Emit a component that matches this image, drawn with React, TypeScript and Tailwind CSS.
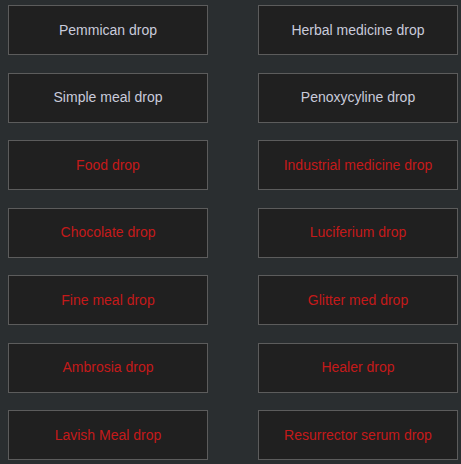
const items: { label: string; unlocked: boolean }[] = [
  { label: "Pemmican drop", unlocked: true },
  { label: "Herbal medicine drop", unlocked: true },
  { label: "Simple meal drop", unlocked: true },
  { label: "Penoxycyline drop", unlocked: true },
  { label: "Food drop", unlocked: false },
  { label: "Industrial medicine drop", unlocked: false },
  { label: "Chocolate drop", unlocked: false },
  { label: "Luciferium drop", unlocked: false },
  { label: "Fine meal drop", unlocked: false },
  { label: "Glitter med drop", unlocked: false },
  { label: "Ambrosia drop", unlocked: false },
  { label: "Healer drop", unlocked: false },
  { label: "Lavish Meal drop", unlocked: false },
  { label: "Resurrector serum drop", unlocked: false },
];

export default function App() {
  return (
    <div className="w-[461px] h-[464px] bg-[#2a2e30] pt-[5px] pl-[8px] font-['Liberation_Sans',Arial,sans-serif] overflow-hidden">
      <div className="grid grid-cols-[200px_200px] gap-x-[50px] gap-y-[17.5px]">
        {items.map((item) => (
          <button
            key={item.label}
            className={`h-[50px] bg-[#202020] border border-[#5c5c5c] text-[14px] flex items-center justify-center ${
              item.unlocked ? "text-[#c9cbdb]" : "text-[#c41a1a]"
            }`}
          >
            {item.label}
          </button>
        ))}
      </div>
    </div>
  );
}
